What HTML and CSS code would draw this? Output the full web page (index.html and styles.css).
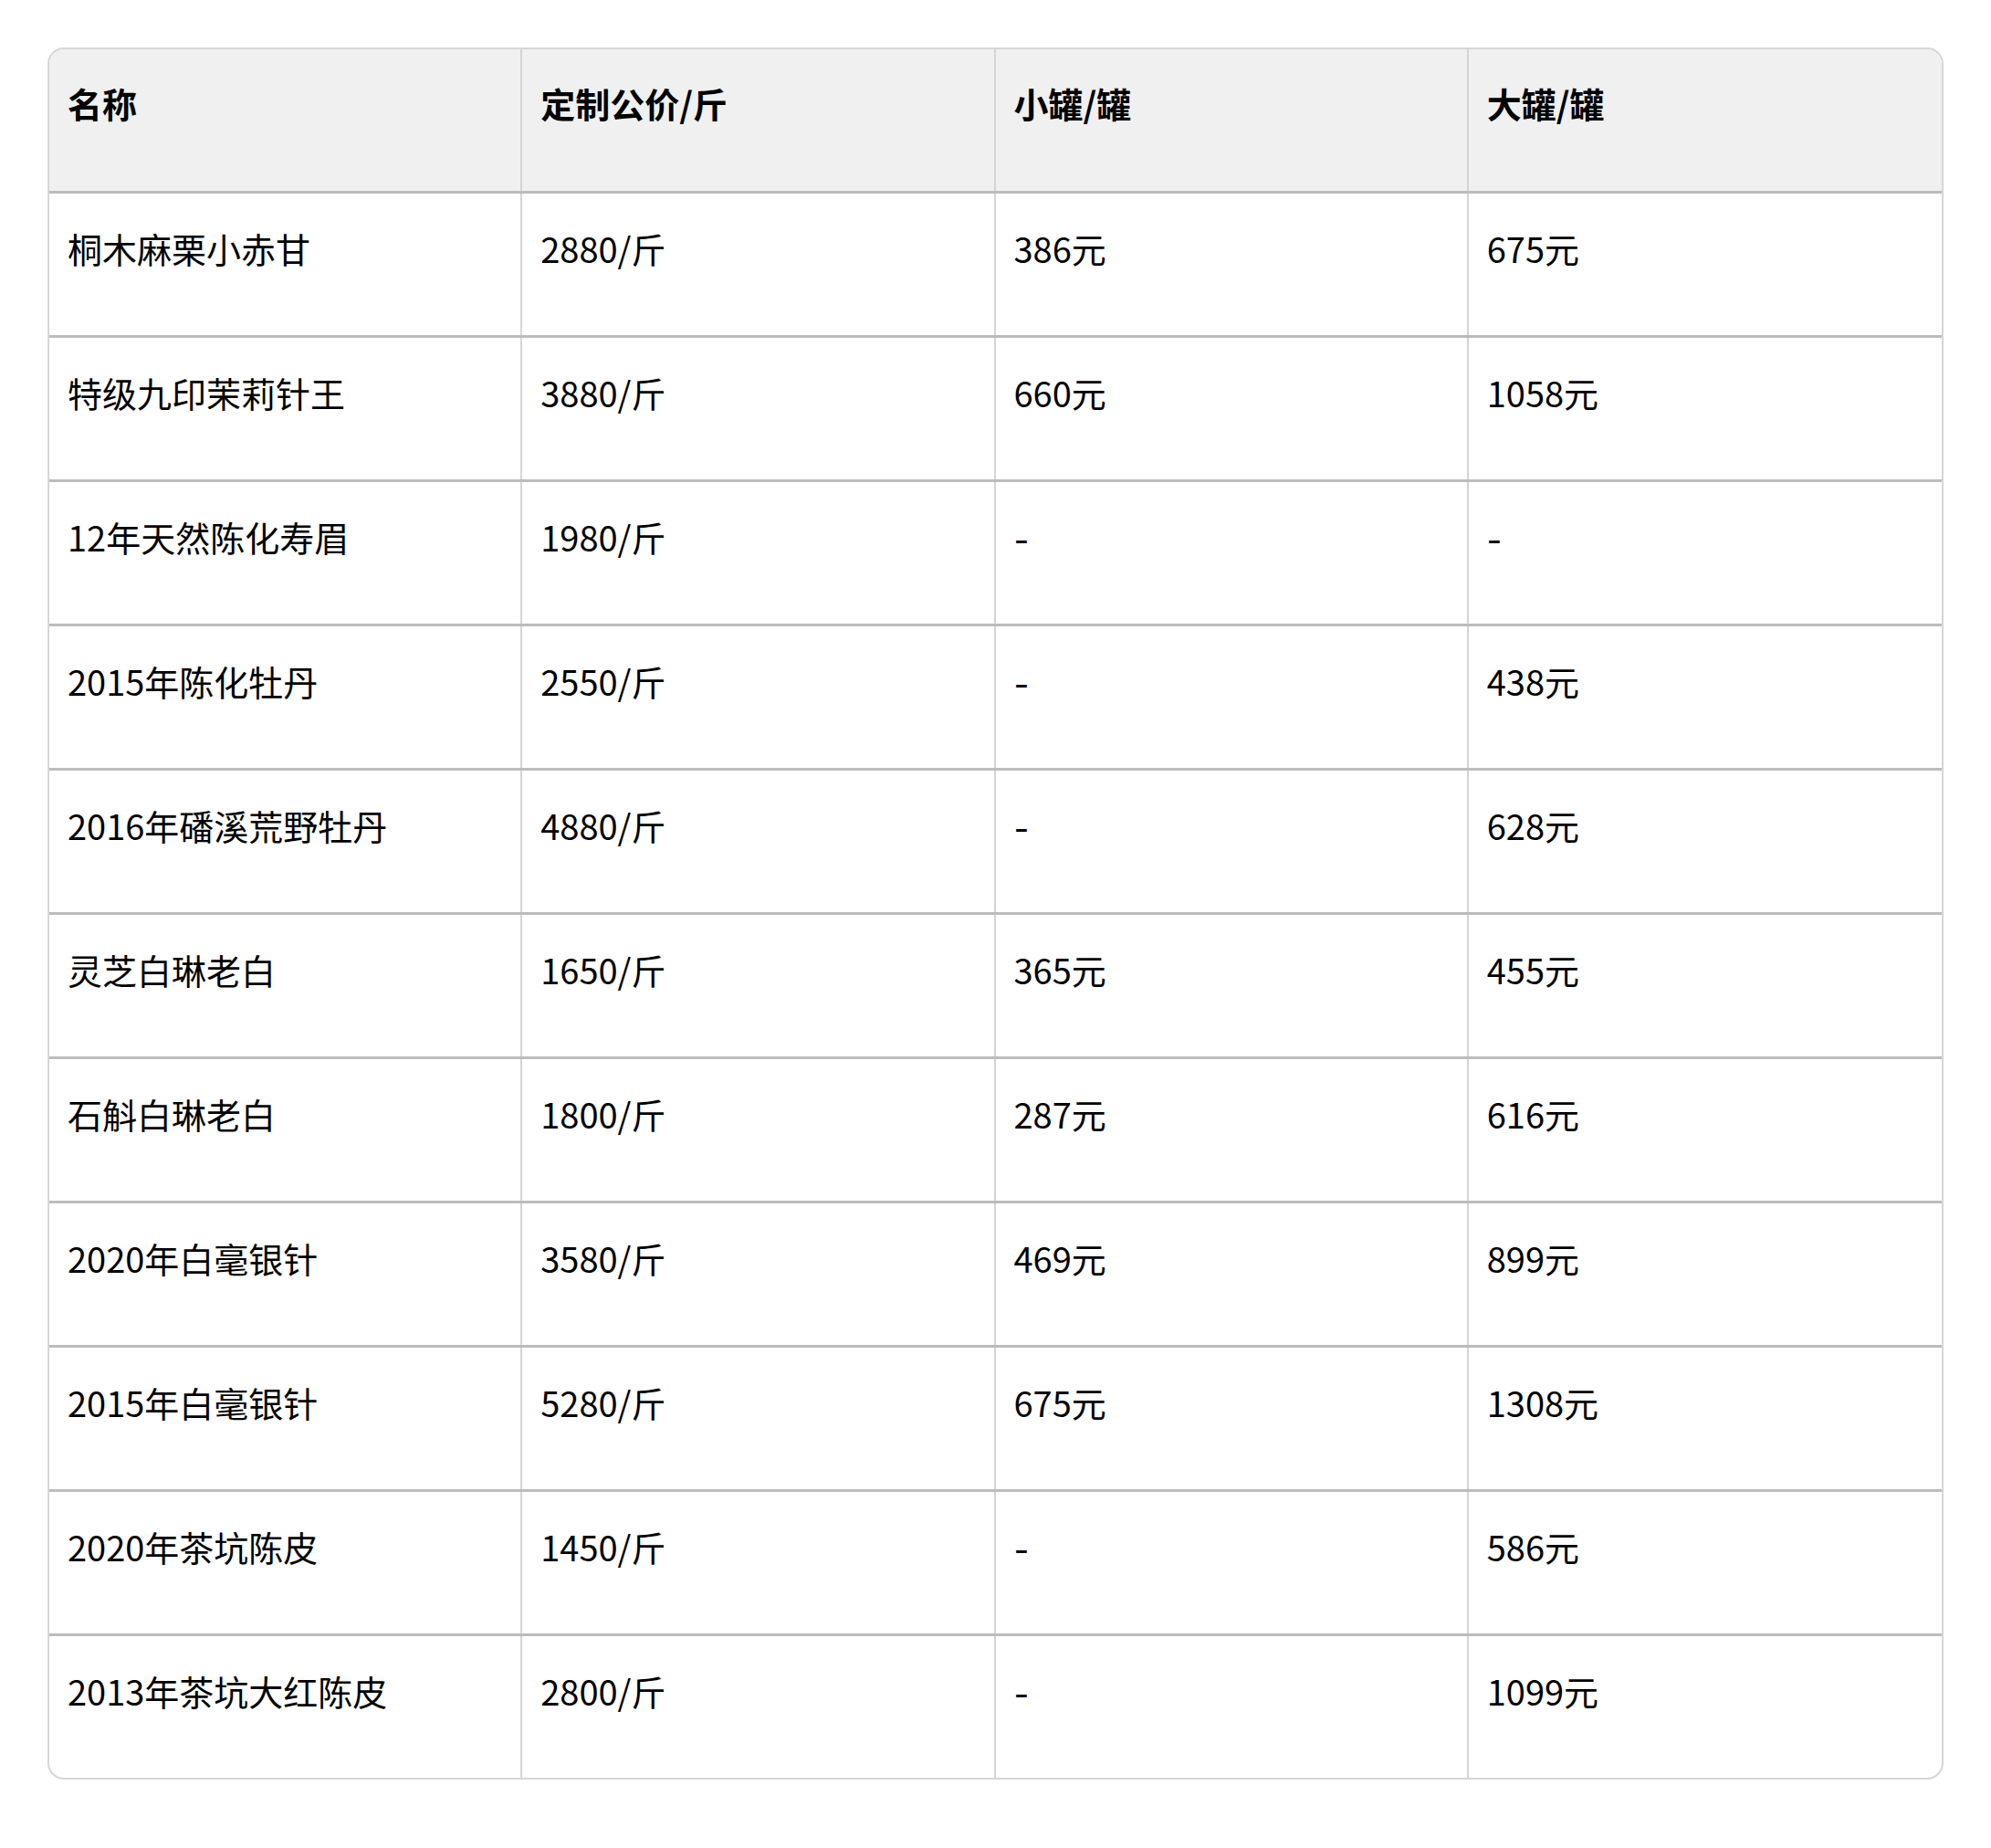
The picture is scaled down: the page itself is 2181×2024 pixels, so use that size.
FILE: index.html
```html
<!DOCTYPE html>
<html lang="zh-CN">
<head>
<meta charset="utf-8">
<title>价格表</title>
<link rel="stylesheet" href="styles.css">
</head>
<body>
<div class="page">
  <div class="table">
    <div class="row head">
      <div class="cell">名称</div>
      <div class="cell">定制公价/斤</div>
      <div class="cell">小罐/罐</div>
      <div class="cell">大罐/罐</div>
    </div>
    <div class="row">
      <div class="cell">桐木麻栗小赤甘</div>
      <div class="cell">2880/斤</div>
      <div class="cell">386元</div>
      <div class="cell">675元</div>
    </div>
    <div class="row">
      <div class="cell">特级九印茉莉针王</div>
      <div class="cell">3880/斤</div>
      <div class="cell">660元</div>
      <div class="cell">1058元</div>
    </div>
    <div class="row">
      <div class="cell">12年天然陈化寿眉</div>
      <div class="cell">1980/斤</div>
      <div class="cell"><span class="dash">-</span></div>
      <div class="cell"><span class="dash">-</span></div>
    </div>
    <div class="row">
      <div class="cell">2015年陈化牡丹</div>
      <div class="cell">2550/斤</div>
      <div class="cell"><span class="dash">-</span></div>
      <div class="cell">438元</div>
    </div>
    <div class="row">
      <div class="cell">2016年磻溪荒野牡丹</div>
      <div class="cell">4880/斤</div>
      <div class="cell"><span class="dash">-</span></div>
      <div class="cell">628元</div>
    </div>
    <div class="row">
      <div class="cell">灵芝白琳老白</div>
      <div class="cell">1650/斤</div>
      <div class="cell">365元</div>
      <div class="cell">455元</div>
    </div>
    <div class="row">
      <div class="cell">石斛白琳老白</div>
      <div class="cell">1800/斤</div>
      <div class="cell">287元</div>
      <div class="cell">616元</div>
    </div>
    <div class="row">
      <div class="cell">2020年白毫银针</div>
      <div class="cell">3580/斤</div>
      <div class="cell">469元</div>
      <div class="cell">899元</div>
    </div>
    <div class="row">
      <div class="cell">2015年白毫银针</div>
      <div class="cell">5280/斤</div>
      <div class="cell">675元</div>
      <div class="cell">1308元</div>
    </div>
    <div class="row">
      <div class="cell">2020年茶坑陈皮</div>
      <div class="cell">1450/斤</div>
      <div class="cell"><span class="dash">-</span></div>
      <div class="cell">586元</div>
    </div>
    <div class="row last">
      <div class="cell">2013年茶坑大红陈皮</div>
      <div class="cell">2800/斤</div>
      <div class="cell"><span class="dash">-</span></div>
      <div class="cell">1099元</div>
    </div>
  </div>
</div>
</body>
</html>
```
FILE: styles.css
```css
html, body {
  margin: 0;
  padding: 0;
  background: #ffffff;
}

body {
  font-family: "Noto Sans CJK SC", "Noto Sans", sans-serif;
  color: #000000;
}

.page {
  padding: 52px;
}

.table {
  border: 2px solid #d6d6d6;
  border-radius: 18px;
  overflow: hidden;
  background: #ffffff;
}

.row {
  display: grid;
  grid-template-columns: repeat(4, 1fr);
  height: 158px;
  box-sizing: border-box;
  border-bottom: 3px solid #bcbcbc;
}

.row.last {
  border-bottom: none;
  height: 155px;
}

.row.head {
  background: #f0f0f0;
  font-weight: 700;
}

.cell {
  font-size: 38px;
  line-height: 57px;
  padding: 31px 20px 0 20px;
  box-sizing: border-box;
  white-space: nowrap;
  border-right: 2px solid #d4d4d4;
}

.cell:last-child {
  border-right: none;
}

.row.head .cell {
  padding-top: 30px;
}

.dash {
  font-family: "Liberation Sans", sans-serif;
  display: inline-block;
  transform: scaleX(1.25);
  transform-origin: left center;
}
```
